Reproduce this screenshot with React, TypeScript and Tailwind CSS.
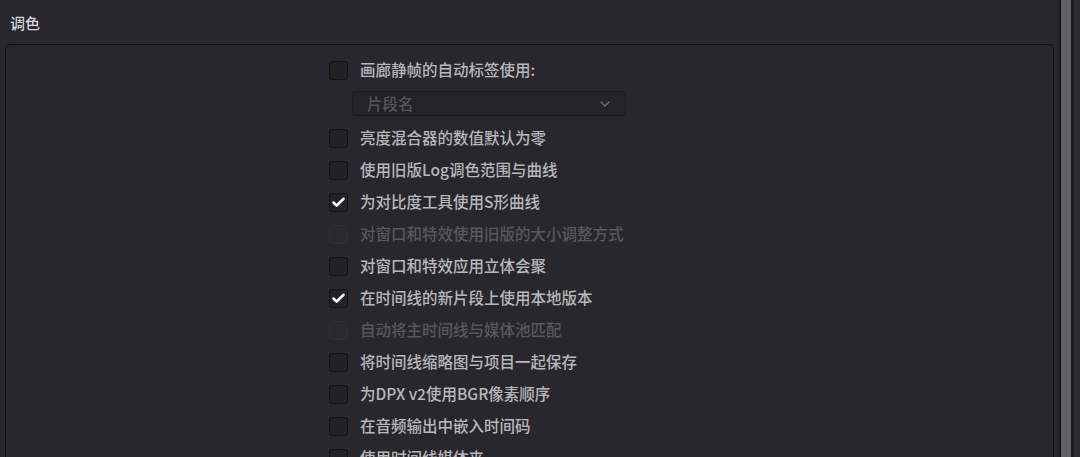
import { Check, ChevronDown } from "lucide-react";

type Row = { label: string; checked?: boolean; disabled?: boolean };

const rowsAfterSelect: Row[] = [
  { label: "亮度混合器的数值默认为零" },
  { label: "使用旧版Log调色范围与曲线" },
  { label: "为对比度工具使用S形曲线", checked: true },
  { label: "对窗口和特效使用旧版的大小调整方式", disabled: true },
  { label: "对窗口和特效应用立体会聚" },
  { label: "在时间线的新片段上使用本地版本", checked: true },
  { label: "自动将主时间线与媒体池匹配", disabled: true },
  { label: "将时间线缩略图与项目一起保存" },
  { label: "为DPX v2使用BGR像素顺序" },
  { label: "在音频输出中嵌入时间码" },
  { label: "使用时间线媒体夹" },
];

function CheckRow({ label, checked, disabled }: Row) {
  return (
    <div className="flex h-8 items-center gap-3">
      <span
        className={`grid h-[19px] w-[19px] shrink-0 place-items-center rounded-[3px] border ${
          disabled
            ? "border-[#303034] bg-[#2a292f]"
            : "border-[#131315] bg-[#222224]"
        }`}
      >
        {checked && <Check size={15} strokeWidth={4} className="text-white" />}
      </span>
      <span
        className={`text-[15.5px] font-medium leading-none ${
          disabled ? "text-[#58585c]" : "text-[#b8b8bb]"
        }`}
      >
        {label}
      </span>
    </div>
  );
}

export default function App() {
  return (
    <div
      className="flex h-[457px] w-[1080px] overflow-hidden bg-[#28272d]"
      style={{ fontFamily: '"Noto Sans CJK SC", "Noto Sans", sans-serif' }}
    >
      <div className="flex min-w-0 flex-1 flex-col">
        <div className="flex h-[44px] shrink-0 items-center pl-[10px] pt-[3px] text-[15px] font-medium text-[#d8d8da]">
          调色
        </div>
        <div className="ml-[5px] mr-[5px] flex-1 rounded-t-[5px] border-x-[1.5px] border-t-[1.5px] border-[#121214] pl-[323px] pt-[9px]">
          <CheckRow label="画廊静帧的自动标签使用:" />
          <div className="mb-[6px] ml-[23px] mt-[5px] flex h-[25px] w-[274px] items-center justify-between rounded-[3px] border border-[#1d1d20] bg-[#242428] pl-[14px] pr-[12px]">
            <span className="text-[15.5px] font-medium leading-none text-[#56565a]">片段名</span>
            <ChevronDown size={16} strokeWidth={2} className="text-[#6c6c70]" />
          </div>
          {rowsAfterSelect.map((r) => (
            <CheckRow key={r.label} {...r} />
          ))}
        </div>
      </div>
      <div className="flex w-[21px] shrink-0">
        <div className="w-[2px] bg-[#18181a]" />
        <div className="w-[10px] bg-[#5f6268]" />
        <div className="w-[3px] bg-[#1c1c1e]" />
        <div className="flex-1 bg-[#2d2d31]" />
      </div>
    </div>
  );
}
